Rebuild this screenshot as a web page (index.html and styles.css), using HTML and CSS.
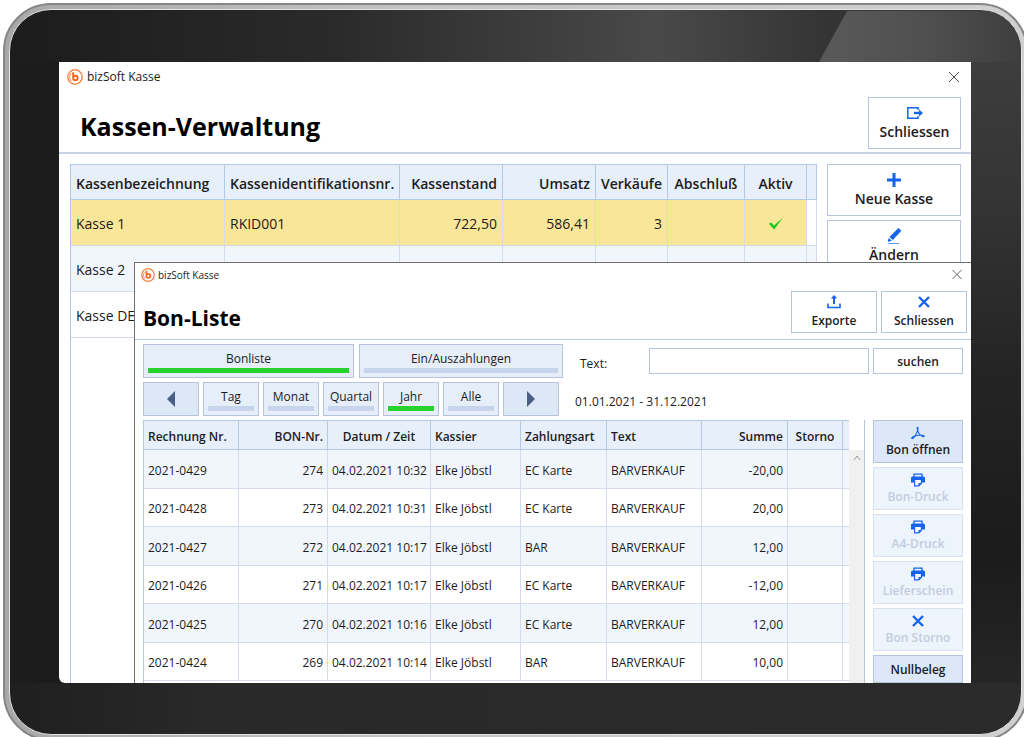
FILE: index.html
```html
<!DOCTYPE html>
<html lang="de">
	<head>
		<title>bizSoft Kasse</title>

		<meta charset="utf-8">
		<meta name="viewport" content="width=device-width, initial-scale=1.0">

		<link rel="stylesheet" href="styles.css">
	</head>

	<body>
		<!-- Shared icons -->
		<svg class="sprite" aria-hidden="true">
			<symbol id="logo" viewBox="0 0 16 16">
				<circle cx="8" cy="8" r="7.2" fill="#fff" stroke="#f58a4b" stroke-width="1.5"/>
				<path d="M6.2 3.2v7M6.2 9a2.2 2.2 0 1 0 4.4 0a2.2 2.2 0 1 0-4.4 0" fill="none" stroke="#f26a21" stroke-width="2"/>
				<path d="M4.3 4.4A5 5 0 0 0 4.6 12" fill="none" stroke="#f58a4b"/>
			</symbol>
			<symbol id="close" viewBox="0 0 12 12">
				<path d="M1 1l10 10M11 1L1 11" fill="none" stroke="#555" stroke-width="1"/>
			</symbol>
			<symbol id="exit" viewBox="0 0 16 12">
				<path d="M11 3V.8H.8v10.4H11V9" fill="none" stroke="#1464f0" stroke-width="1.5"/>
				<path d="M7 4.8h5V2.6L16 6l-4 3.4V7.2H7z" fill="#1464f0"/>
			</symbol>
			<symbol id="plus" viewBox="0 0 14 14">
				<path d="M7 0v14M0 7h14" fill="none" stroke="#1464f0" stroke-width="3"/>
			</symbol>
			<symbol id="pen" viewBox="0 0 15 17">
				<path d="M11.4.6l3 2.6-8.6 9.2-3.4-2.8zM1.7 10.4l3.2 2.8-4.3 1.2z" fill="#1464f0"/>
				<path d="M1 16h11" stroke="#6d9cf5" stroke-width="1"/>
			</symbol>
			<symbol id="export" viewBox="0 0 14 14">
				<path d="M1 8.5v4h12v-4" fill="none" stroke="#1464f0" stroke-width="1.6"/>
				<path d="M7 0l3.2 3.6H8V9H6V3.6H3.8z" fill="#1464f0"/>
			</symbol>
			<symbol id="cross" viewBox="0 0 12 12">
				<path d="M1 1l10 10M11 1L1 11" fill="none" stroke="#1464f0" stroke-width="2.4"/>
			</symbol>
			<symbol id="pdf" viewBox="0 0 14 13">
				<path d="M6.4.8c1.500 0 0 5-2 8C3 11.200 1.500 12.600.8 11.800c-.6-1 3.200-2.600 7-3 3-.3 5.600 0 5.400 1-.4 1.200-3.400-.4-5-2.600C6.800 5.200 5.600.8 6.400.8z" fill="none" stroke="#1464f0" stroke-width="1.1"/>
			</symbol>
			<symbol id="printer" viewBox="0 0 14 13">
				<path d="M3 3.5V.7h8v2.800" fill="none" stroke="#1464f0" stroke-width="1.3"/>
				<path d="M1.5 3h11Q14 3 14 4.500V9h-3V6.500H3V9H0V4.500Q0 3 1.500 3z" fill="#1464f0"/>
				<path d="M3.6 6.500v5.800h4.200l2.600-2.600V6.500" fill="#fff" stroke="#1464f0" stroke-width="1.2"/>
				<path d="M7.5 12.600V9.500h3.200z" fill="#1464f0"/>
			</symbol>
		</svg>

		<div class="tablet">
			<div class="bezel">
				<div class="screen">

					<!-- Kassen-Verwaltung -->
					<div class="window">
						<div class="titlebar">
							<svg class="logo"><use href="#logo"/></svg>
							<span>bizSoft Kasse</span>
							<button class="window-close" aria-label="Fenster zumachen"><svg><use href="#close"/></svg></button>
						</div>
						<div class="window-header">
							<h1>Kassen-Verwaltung</h1>
							<button class="tool-button exit-button">
								<svg class="icon-exit"><use href="#exit"/></svg>
								Schliessen
							</button>
						</div>
						<div class="window-body">
							<div class="grid-box">
								<table class="grid">
									<colgroup>
										<col class="col-name"><col><col class="col-stand"><col class="col-umsatz">
										<col class="col-verkauf"><col class="col-abschluss"><col class="col-aktiv"><col class="col-rest">
									</colgroup>
									<thead>
										<tr>
											<th>Kassenbezeichnung</th>
											<th>Kassenidentifikationsnr.</th>
											<th class="number">Kassenstand</th>
											<th class="number">Umsatz</th>
											<th class="number">Verkäufe</th>
											<th class="middle">Abschluß</th>
											<th class="middle">Aktiv</th>
											<th></th>
										</tr>
									</thead>
									<tbody>
										<tr class="selected">
											<td>Kasse 1</td>
											<td>RKID001</td>
											<td class="number">722,50</td>
											<td class="number">586,41</td>
											<td class="number">3</td>
											<td></td>
											<td class="middle">
												<svg class="check" viewBox="0 0 16 13"><path d="M.8 6.800L3.200 5.400 6 8.600 15 .6 6.200 12.600z" fill="#1fc81f"/></svg>
											</td>
											<td></td>
										</tr>
										<tr>
											<td>Kasse 2</td>
											<td></td><td></td><td></td><td></td><td></td><td></td><td></td>
										</tr>
										<tr>
											<td>Kasse DE</td>
											<td></td><td></td><td></td><td></td><td></td><td></td><td></td>
										</tr>
									</tbody>
								</table>
							</div>
							<div class="side-buttons">
								<button class="tool-button"><svg class="icon-plus"><use href="#plus"/></svg>Neue Kasse</button>
								<button class="tool-button"><svg class="icon-pen"><use href="#pen"/></svg>Ändern</button>
							</div>
						</div>
					</div>

					<!-- Bon-Liste, lies over the first window -->
					<div class="window dialog">
						<div class="titlebar">
							<svg class="logo"><use href="#logo"/></svg>
							<span>bizSoft Kasse</span>
							<button class="window-close" aria-label="Fenster zumachen"><svg><use href="#close"/></svg></button>
						</div>
						<div class="window-header">
							<h2>Bon-Liste</h2>
							<button class="tool-button"><svg class="icon-export"><use href="#export"/></svg>Exporte</button>
							<button class="tool-button"><svg class="icon-cross"><use href="#cross"/></svg>Schliessen</button>
						</div>

						<div class="filters">
							<div class="filter-row">
								<button class="toggle tab-bons active">Bonliste</button>
								<button class="toggle tab-cash">Ein/Auszahlungen</button>
								<label for="search">Text:</label>
								<input id="search" class="search" type="text">
								<button class="search-button">suchen</button>
							</div>
							<div class="filter-row">
								<button class="arrow" aria-label="Zurück"><svg viewBox="0 0 8 16"><path d="M8 0v16L0 8z" fill="#4a5f88"/></svg></button>
								<button class="toggle">Tag</button>
								<button class="toggle">Monat</button>
								<button class="toggle">Quartal</button>
								<button class="toggle active">Jahr</button>
								<button class="toggle">Alle</button>
								<button class="arrow" aria-label="Weiter"><svg viewBox="0 0 8 16"><path d="M0 0v16l8-8z" fill="#4a5f88"/></svg></button>
								<span class="range">01.01.2021 - 31.12.2021</span>
							</div>
						</div>

						<div class="window-body">
							<div class="grid-box">
								<table class="grid">
									<colgroup>
										<col class="col-rechnung"><col class="col-bon"><col class="col-datum"><col class="col-kassier">
										<col class="col-zahlung"><col><col class="col-summe"><col class="col-storno"><col class="col-rest">
									</colgroup>
									<thead>
										<tr>
											<th>Rechnung Nr.</th>
											<th class="number">BON-Nr.</th>
											<th class="middle">Datum / Zeit</th>
											<th>Kassier</th>
											<th>Zahlungsart</th>
											<th>Text</th>
											<th class="number">Summe</th>
											<th class="middle">Storno</th>
											<th></th>
										</tr>
									</thead>
									<tbody>
										<tr><td>2021-0429</td><td class="number">274</td><td>04.02.2021 10:32</td><td>Elke Jöbstl</td><td>EC Karte</td><td>BARVERKAUF</td><td class="number">-20,00</td><td></td><td></td></tr>
										<tr><td>2021-0428</td><td class="number">273</td><td>04.02.2021 10:31</td><td>Elke Jöbstl</td><td>EC Karte</td><td>BARVERKAUF</td><td class="number">20,00</td><td></td><td></td></tr>
										<tr><td>2021-0427</td><td class="number">272</td><td>04.02.2021 10:17</td><td>Elke Jöbstl</td><td>BAR</td><td>BARVERKAUF</td><td class="number">12,00</td><td></td><td></td></tr>
										<tr><td>2021-0426</td><td class="number">271</td><td>04.02.2021 10:17</td><td>Elke Jöbstl</td><td>EC Karte</td><td>BARVERKAUF</td><td class="number">-12,00</td><td></td><td></td></tr>
										<tr><td>2021-0425</td><td class="number">270</td><td>04.02.2021 10:16</td><td>Elke Jöbstl</td><td>EC Karte</td><td>BARVERKAUF</td><td class="number">12,00</td><td></td><td></td></tr>
										<tr><td>2021-0424</td><td class="number">269</td><td>04.02.2021 10:14</td><td>Elke Jöbstl</td><td>BAR</td><td>BARVERKAUF</td><td class="number">10,00</td><td></td><td></td></tr>
									</tbody>
								</table>
								<div class="scrollbar">
									<svg viewBox="0 0 8 6"><path d="M1 5l3-4 3 4" fill="none" stroke="#999"/></svg>
								</div>
							</div>
							<div class="side-buttons">
								<button class="tool-button"><svg class="icon-pdf"><use href="#pdf"/></svg>Bon öffnen</button>
								<button class="tool-button" disabled><svg class="icon-printer"><use href="#printer"/></svg>Bon-Druck</button>
								<button class="tool-button" disabled><svg class="icon-printer"><use href="#printer"/></svg>A4-Druck</button>
								<button class="tool-button" disabled><svg class="icon-printer"><use href="#printer"/></svg>Lieferschein</button>
								<button class="tool-button" disabled><svg class="icon-cross"><use href="#cross"/></svg>Bon Storno</button>
								<button class="tool-button">Nullbeleg</button>
							</div>
						</div>
					</div>

				</div>
			</div>
		</div>
	</body>
</html>
```

FILE: styles.css
```css
* {
  box-sizing: border-box;
}

html,
body {
  height: 100%;
}

body {
  margin: 0;
  display: flex;
  overflow: hidden;
  background-color: #ffffff;
  color: #1c1c1c;
  font-family: "Open Sans", "Noto Sans", sans-serif;
  font-size: 12px;
}

button,
input {
  margin: 0;
  padding: 0;
  font: inherit;
  color: inherit;
  border: 1px solid #b4c4dc;
  border-radius: 0;
  background-color: #ffffff;
}

svg {
  display: block;
}

.sprite {
  position: absolute;
  width: 0;
  height: 0;
}

/* Tablet case */

.tablet {
  flex: 1;
  display: flex;
  margin: 3px -4px -4px 3px;
  padding: 4px;
  border: 2px solid #868686;
  border-radius: 48px;
  background: linear-gradient(to right, #a8a8a8, #c4c4c4 40%, #d0d0d0);
}

.bezel {
  position: relative;
  flex: 1;
  display: flex;
  min-width: 0;
  padding: 52px 50px 51px 49px;
  border: 1px solid #e4e4e4;
  border-radius: 42px;
  overflow: hidden;
  background:
    linear-gradient(to right, #1c1c1c, #2a2a2a 32%, #494949 64%, #343434 81%) top / 100% 52px no-repeat,
    linear-gradient(to right, #1f1f1f, #292929 20%, #2b2b2b) bottom / 100% 51px no-repeat,
    linear-gradient(#404040, #353535 25%, #242424 50%, #1b1b1b 75%, #2a2a2a) right / 60px 100% no-repeat,
    #1c1c1c;
}

/* light falling on the top right corner */
.bezel::before {
  content: "";
  position: absolute;
  top: 1px;
  right: 0;
  width: 202px;
  height: 51px;
  background: linear-gradient(to right, #595959, #505050 50%, #3e3e3e);
  clip-path: polygon(28px 0, 100% 0, 100% 100%, 0 100%);
}

.screen {
  position: relative;
  flex: 1;
  display: flex;
  min-width: 0;
  overflow: hidden;
  border-radius: 0 0 0 6px;
  background-color: #ffffff;
}

/* Windows */

.window {
  flex: 1;
  display: flex;
  flex-direction: column;
  min-width: 0;
  background-color: #ffffff;
}

.titlebar {
  display: flex;
  align-items: center;
  gap: 4px;
  height: 29px;
  padding: 0 10px 0 8px;
}

.logo {
  width: 16px;
  height: 16px;
}

.window-close {
  margin-left: auto;
  border: 0;
}

.window-close svg {
  width: 14px;
  height: 12px;
}

.window-header {
  display: flex;
  justify-content: space-between;
  height: 63px;
  padding: 6px 10px 4px 21px;
  border-bottom: 2px solid #c8d4e4;
}

h1,
h2 {
  margin: 0;
  color: #000000;
  font-weight: 700;
}

h1 {
  font-size: 25px;
  line-height: 58px;
}

.window-body {
  flex: 1;
  display: flex;
  gap: 10px;
  min-height: 0;
  padding: 10px 10px 0 11px;
}

.grid-box {
  flex: 1;
  display: flex;
  min-width: 0;
  border-left: 1px solid #b4c8e8;
}

.tool-button {
  display: flex;
  flex-direction: column;
  align-items: center;
  justify-content: center;
  height: 52px;
  font-size: 14px;
  font-weight: 600;
  line-height: 20px;
}

.tool-button svg {
  height: 18px;
}

.exit-button {
  width: 93px;
}

.side-buttons {
  display: flex;
  flex-direction: column;
  gap: 4px;
  width: 134px;
}

.side-buttons .tool-button {
  flex: none;
}

.icon-exit { width: 16px; }
.icon-plus { width: 14px; }
.icon-pen { width: 15px; }
.icon-export { width: 14px; }
.icon-cross { width: 12px; }
.icon-pdf { width: 14px; }
.icon-printer { width: 14px; }

/* Tables */

.grid {
  flex: 1;
  align-self: flex-start;
  width: 100%;
  min-width: 0;
  table-layout: fixed;
  border-collapse: separate;
  border-spacing: 0;
  font-size: 14px;
}

.grid th,
.grid td {
  height: 46px;
  padding: 2px 5px 0;
  border-right: 1px solid #d4dceb;
  border-bottom: 1px solid #d4dceb;
  text-align: left;
  white-space: nowrap;
}

.grid th {
  height: 36px;
  border-top: 1px solid #b4c8e8;
  border-right-color: #b4c8e8;
  border-bottom-color: #b4c8e8;
  background-color: #e6effa;
  font-weight: 600;
}

.grid tbody tr:nth-child(even) {
  background-color: #f1f6fc;
}

.grid .number {
  text-align: right;
}

.grid .middle {
  text-align: center;
}

.selected td:not(:last-child) {
  background-color: #fae699;
}

.check {
  width: 16px;
  height: 13px;
  margin: 0 auto;
}

.col-name { width: 154px; }
.col-stand { width: 103px; }
.col-umsatz { width: 93px; }
.col-verkauf { width: 72px; }
.col-abschluss { width: 77px; }
.col-aktiv { width: 62px; }
.col-rest { width: 10px; }

/* Bon-Liste */

.dialog {
  position: absolute;
  top: 200px;
  right: 0;
  bottom: 0;
  left: 75px;
  border-top: 1px solid #707070;
  border-left: 1px solid #707070;
}

.dialog .titlebar {
  height: 23px;
  gap: 3px;
  padding: 0 7px 0 6px;
  font-size: 10px;
}

.dialog .logo {
  width: 14px;
  height: 14px;
}

.dialog .window-close svg {
  height: 11px;
}

.dialog .window-header {
  gap: 4px;
  height: 54px;
  padding: 5px 4px 6px 8px;
  border-bottom: 1px solid #b4c8dc;
}

h2 {
  flex: 1;
  font-size: 21px;
  line-height: 54px;
}

.dialog .tool-button {
  gap: 3px;
  width: 86px;
  height: 42px;
  font-size: 12px;
  line-height: 17px;
}

.dialog .tool-button svg {
  height: 14px;
}

.filters {
  display: flex;
  flex-direction: column;
  gap: 4px;
  padding: 4px 8px;
}

.filter-row {
  display: flex;
  align-items: center;
  gap: 4px;
}

.toggle,
.arrow {
  display: flex;
  flex-direction: column;
  align-items: center;
  justify-content: center;
  width: 56px;
  height: 34px;
  background-color: #e6eef9;
}

.toggle {
  justify-content: flex-end;
  padding: 0 4px 4px;
  line-height: 18px;
}

.toggle::after {
  content: "";
  align-self: stretch;
  height: 5px;
  background-color: #c6d5ec;
}

.toggle.active::after {
  background-color: #28d22e;
}

.arrow {
  background-color: #dce8f6;
}

.arrow svg {
  width: 8px;
  height: 16px;
}

.tab-bons {
  width: 211px;
  margin-right: 1px;
}

.tab-cash {
  width: 204px;
}

.filter-row label {
  width: 78px;
  padding: 4px 0 0 13px;
}

.search {
  flex: 1;
  min-width: 0;
  height: 26px;
  padding: 0 6px;
}

.search-button {
  width: 90px;
  height: 26px;
  font-weight: 600;
}

.range {
  padding: 5px 0 0 12px;
}

.dialog .window-body {
  gap: 8px;
  padding: 0 8px;
}

.dialog .grid-box {
  border-right: 1px solid #b4c8dc;
}

.dialog .grid {
  font-size: 12px;
}

.dialog .grid th,
.dialog .grid td {
  height: 38px;
  padding: 2px 4px 0;
}

.dialog .grid th {
  height: 30px;
}

.dialog .grid tbody tr:nth-child(odd) td {
  height: 39px;
}

.dialog .grid tbody tr:nth-child(odd) {
  background-color: #f1f6fc;
}

.dialog .grid tbody tr:nth-child(even) {
  background-color: #ffffff;
}

.dialog .grid th:last-child,
.dialog .grid td:last-child {
  border-right: 0;
}

.scrollbar {
  flex: none;
  width: 15px;
  margin-top: 30px;
  padding: 5px 4px;
  background-color: #f0f0f0;
}

.scrollbar svg {
  width: 8px;
  height: 6px;
}

.dialog .side-buttons {
  width: 90px;
}

.dialog .side-buttons .tool-button {
  gap: 1px;
  width: 90px;
  height: 43px;
  background-color: #dce8f7;
}

.dialog .side-buttons .tool-button:last-child {
  height: 28px;
}

.dialog .side-buttons .tool-button:disabled {
  border-color: #d8e2f0;
  background-color: #eef4fb;
  color: #c2cce0;
}

.col-rechnung { width: 95px; }
.col-bon { width: 89px; }
.col-datum { width: 103px; }
.col-kassier { width: 90px; }
.col-zahlung { width: 86px; }
.col-summe { width: 86px; }
.col-storno { width: 55px; }
.dialog .col-rest { width: 6px; }
```
